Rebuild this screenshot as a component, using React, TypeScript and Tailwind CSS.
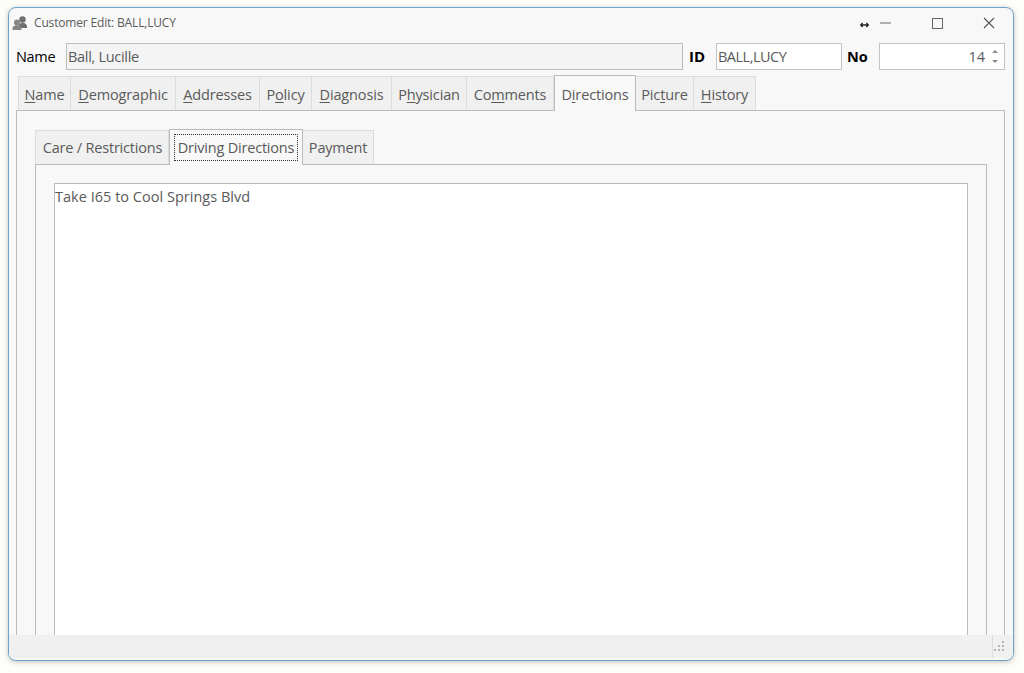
import React from "react";

const font = { fontFamily: '"Open Sans", "Noto Sans", sans-serif' };

const outerTabs: { pre: string; u: string; post: string; w: string; active?: boolean }[] = [
  { pre: "", u: "N", post: "ame", w: "w-[53px]" },
  { pre: "", u: "D", post: "emographic", w: "w-[105px]" },
  { pre: "", u: "A", post: "ddresses", w: "w-[84px]" },
  { pre: "P", u: "o", post: "licy", w: "w-[52px]" },
  { pre: "", u: "D", post: "iagnosis", w: "w-[80px]" },
  { pre: "P", u: "h", post: "ysician", w: "w-[75px]" },
  { pre: "Co", u: "m", post: "ments", w: "w-[87px]" },
  { pre: "D", u: "i", post: "rections", w: "w-[82px]", active: true },
  { pre: "Pic", u: "t", post: "ure", w: "w-[58px]" },
  { pre: "", u: "H", post: "istory", w: "w-[62px]" },
];

function PeopleIcon() {
  return (
    <svg width="16" height="16" viewBox="0 0 16 16" fill="#6f6f6f">
      <circle cx="10.5" cy="4.5" r="3.2" />
      <path d="M6.5 12c0-3 2-4.2 4-4.2s4.5 1.2 4.5 4V13H7z" />
      <circle cx="5" cy="7.5" r="3" fill="#858585" />
      <path d="M0.5 15v-1.5c0-2.2 2-3.2 4.5-3.2s4.5 1 4.5 3.2V15z" fill="#858585" />
    </svg>
  );
}

export default function App() {
  return (
    <div style={font} className="w-[1024px] h-[673px] overflow-hidden bg-[#fdfdf9] pl-[8px] pt-[7px] text-[#5a5a5a]">
      <div className="w-[1006px] h-[654px] flex flex-col overflow-hidden rounded-[8px] border border-[#6fa3cf] bg-[#f8f8f8] shadow-[0_1px_5px_rgba(90,90,70,0.35)]">
        {/* title bar */}
        <div className="h-[30px] shrink-0 flex items-center pl-[3px]">
          <PeopleIcon />
          <span className="ml-[6px] text-[12px] tracking-[-0.17px] text-[#5c5c5c]">Customer Edit: BALL,LUCY</span>
          <div className="ml-auto flex items-center text-[#555555]">
            <svg width="9" height="6" viewBox="0 0 9 6" className="mr-[11px] mt-[3px]">
              <path d="M0.5 3h8M2.6 1 0.7 3l1.9 2M6.4 1 8.3 3 6.4 5" fill="none" stroke="#222222" strokeWidth="1.4" />
            </svg>
            <svg width="11" height="2" viewBox="0 0 11 2" className="mr-[41px]">
              <rect width="11" height="1" y="0.5" fill="#666666" />
            </svg>
            <svg width="11" height="11" viewBox="0 0 11 11" className="mr-[40px]">
              <rect x="0.5" y="0.5" width="10" height="10" fill="none" stroke="#666666" />
            </svg>
            <svg width="12" height="12" viewBox="0 0 12 12" className="mr-[18px]">
              <path d="M1 1l10 10M11 1 1 11" fill="none" stroke="#555555" strokeWidth="1.1" />
            </svg>
          </div>
        </div>

        {/* name row */}
        <div className="mt-[5px] h-[27px] shrink-0 flex items-center text-[14.5px]">
          <span className="ml-[7px] w-[50px] tracking-[-0.3px] text-black">Name</span>
          <div className="w-[617px] h-[27px] flex items-center border border-[#bdbdbd] bg-[#f4f4f4] pl-[1px] tracking-[-0.3px]">Ball, Lucille</div>
          <span className="ml-[6px] w-[27px] font-bold text-[15px] text-black">ID</span>
          <div className="w-[126px] h-[27px] flex items-center border border-[#c4c4c4] bg-white pl-[1px] tracking-[-0.5px]">BALL,LUCY</div>
          <span className="ml-[5px] w-[32px] font-bold text-black">No</span>
          <div className="w-[126px] h-[27px] flex items-center justify-end border border-[#c4c4c4] bg-white">
            <span>14</span>
            <div className="ml-[7px] mr-[6px] flex flex-col gap-[7px]">
              <svg width="6" height="3" viewBox="0 0 6 3"><path d="M3 0 6 3H0z" fill="#8a8a8a" /></svg>
              <svg width="6" height="3" viewBox="0 0 6 3"><path d="M3 3 6 0H0z" fill="#8a8a8a" /></svg>
            </div>
          </div>
        </div>

        {/* outer tabs */}
        <div className="mt-[5px] h-[35px] shrink-0 flex items-end pl-[9px] text-[14.5px] tracking-[-0.15px]">
          {outerTabs.map((t) => (
            <div
              key={t.pre + t.u + t.post}
              className={
                t.active
                  ? `${t.w} h-[36px] -mb-[1px] z-10 flex items-center justify-center border border-b-0 border-[#bcbcbc] bg-[#f8f8f8] pt-[3px]`
                  : `${t.w} h-[34px] flex items-center justify-center border border-l-0 first:border-l border-b-0 border-[#dcdcdc] bg-[#f0f0f0] pt-[3px]`
              }
            >
              <span>
                {t.pre}
                <u className="underline-offset-2">{t.u}</u>
                {t.post}
              </span>
            </div>
          ))}
        </div>

        {/* outer panel */}
        <div className="ml-[7px] mr-[8px] flex-1 min-h-0 overflow-hidden border border-b-0 border-[#bcbcbc] bg-[#f8f8f8] pl-[18px] pr-[17px] pt-[18px]">
          <div className="h-[35px] flex items-end text-[14.5px] tracking-[-0.2px]">
            <div className="w-[134px] h-[34px] flex items-center justify-center border border-b-0 border-[#dcdcdc] bg-[#f0f0f0] pt-[1px] pl-[1px]">Care / Restrictions</div>
            <div className="w-[134px] h-[36px] -mb-[1px] z-10 flex items-center justify-center border border-b-0 border-[#bcbcbc] bg-[#f8f8f8]">
              <span className="border border-dotted border-[#333333] h-[27px] w-[124px] mb-[1px] pt-[1px] flex items-center justify-center">Driving Directions</span>
            </div>
            <div className="w-[71px] h-[34px] flex items-center justify-center border border-l-0 border-b-0 border-[#dcdcdc] bg-[#f0f0f0] pt-[1px]">Payment</div>
          </div>
          <div className="h-[600px] border border-[#bcbcbc] bg-[#f8f8f8] px-[18px] pt-[18px]">
            <div className="h-[600px] border border-[#bcbcbc] bg-white pt-[2px] text-[14.5px] tracking-[0.02px]">Take I65 to Cool Springs Blvd</div>
          </div>
        </div>

        {/* status bar */}
        <div className="h-[23px] shrink-0 flex justify-end bg-[#f0f0f0] mb-[2px]">
          <div className="w-[21px] flex justify-end items-end border-l border-[#dedede] pr-[8px] pb-[5px]">
            <svg width="12" height="12" viewBox="0 0 12 12" fill="#b4b4b4">
              <rect x="9" y="0" width="2" height="2" />
              <rect x="5" y="4" width="2" height="2" />
              <rect x="9" y="4" width="2" height="2" />
              <rect x="1" y="8" width="2" height="2" />
              <rect x="5" y="8" width="2" height="2" />
              <rect x="9" y="8" width="2" height="2" />
            </svg>
          </div>
        </div>
      </div>
    </div>
  );
}
